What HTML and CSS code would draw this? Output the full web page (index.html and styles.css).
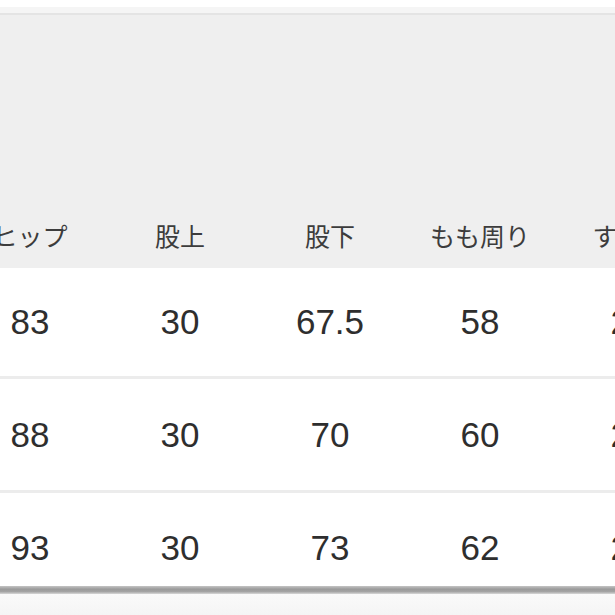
FILE: index.html
```html
<!DOCTYPE html>
<html lang="ja">
<head>
<meta charset="utf-8">
<title>サイズ表</title>
<link rel="stylesheet" href="styles.css">
</head>
<body>
<div class="page">
  <div class="topbar"></div>
  <div class="topgap"></div>
  <div class="head">
    <div class="grid labels">
      <div class="cell">ヒップ</div>
      <div class="cell">股上</div>
      <div class="cell">股下</div>
      <div class="cell">もも周り</div>
      <div class="cell">すそ幅</div>
    </div>
  </div>
  <div class="row r1">
    <div class="grid">
      <div class="cell">83</div>
      <div class="cell">30</div>
      <div class="cell">67.5</div>
      <div class="cell">58</div>
      <div class="cell">21</div>
    </div>
  </div>
  <div class="row r2">
    <div class="grid">
      <div class="cell">88</div>
      <div class="cell">30</div>
      <div class="cell">70</div>
      <div class="cell">60</div>
      <div class="cell">22</div>
    </div>
  </div>
  <div class="row r3">
    <div class="grid">
      <div class="cell">93</div>
      <div class="cell">30</div>
      <div class="cell">73</div>
      <div class="cell">62</div>
      <div class="cell">23</div>
    </div>
  </div>
  <div class="thick"></div>
  <div class="foot"></div>
</div>
</body>
</html>
```

FILE: styles.css
```css
html, body {
  margin: 0;
  padding: 0;
  background: #ffffff;
}
.page {
  width: 615px;
  height: 615px;
  overflow: hidden;
  font-family: "Liberation Sans", "Noto Sans CJK JP", sans-serif;
}
.topbar {
  height: 7px;
  background: #ffffff;
}
.topgap {
  height: 6px;
  background: #f5f5f5;
  border-bottom: 2px solid #e4e4e4;
}
.head {
  height: 253px;
  background: #efefef;
  display: flex;
  flex-direction: column;
  justify-content: flex-end;
}
.grid {
  display: grid;
  grid-template-columns: repeat(5, 150px);
  margin-left: -45px;
  width: 750px;
}
.cell {
  text-align: center;
  white-space: nowrap;
}
.labels {
  height: 64px;
  align-items: center;
  font-family: "Noto Sans CJK JP", sans-serif;
  font-size: 25px;
  color: #3c3c3c;
}
.labels .cell {
  line-height: 64px;
  transform: translateY(-1px);
}
.row {
  background: #ffffff;
  display: flex;
  flex-direction: column;
  justify-content: center;
  font-size: 35px;
  color: #2e2e2e;
}
.row .cell {
  line-height: 40px;
}
.r1 {
  height: 108px;
  border-bottom: 3px solid #ececec;
}
.r2 {
  height: 111px;
  border-bottom: 3px solid #ececec;
}
.r3 {
  height: 93px;
}
.r3 .grid {
  transform: translateY(8px);
}
.thick {
  height: 8px;
  background: linear-gradient(#c4c4c4, #9a9a9a 40%, #a4a4a4 70%, #d8d8d8);
}
.foot {
  height: 40px;
  background: linear-gradient(#fafafa, #f0f0f0);
}
```
